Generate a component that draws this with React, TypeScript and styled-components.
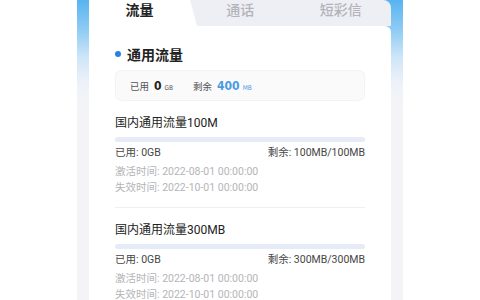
import React from "react";
import styled, { createGlobalStyle } from "styled-components";

const Global = createGlobalStyle`
  html, body { margin: 0; padding: 0; background: #ffffff; }
  body { font-family: "Roboto", "Noto Sans CJK SC", sans-serif; }
  * { box-sizing: border-box; }
`;

const Page = styled.div`
  width: 480px;
  height: 300px;
  overflow: hidden;
  display: flex;
  justify-content: center;
  background: #ffffff;
`;

const Phone = styled.div`
  width: 326px;
  height: 300px;
  padding: 0 12px;
  background: linear-gradient(
    180deg,
    #58b4f1 0px,
    #8fcbf4 30px,
    #cfe6f8 58px,
    #eef2f8 84px,
    #f4f4f6 110px,
    #f4f4f6 100%
  );
  display: flex;
  flex-direction: column;
  overflow: hidden;
`;

const TabBar = styled.div`
  flex-shrink: 0;
  display: grid;
  grid-template-columns: 101px 1fr 1fr;
  height: 26px;
  background: #eeeff5;
  border-top-right-radius: 8px;
`;

const Tab = styled.div<{ $active?: boolean }>`
  position: relative;
  display: flex;
  justify-content: center;
  align-items: flex-start;
  font-family: "Noto Sans CJK SC", sans-serif;
  font-size: 14px;
  line-height: 16px;
  font-weight: ${(p) => (p.$active ? 700 : 500)};
  color: ${(p) => (p.$active ? "#222222" : "#b3b3b9")};
  padding-top: 1px;
  &::before {
    content: "";
    display: ${(p) => (p.$active ? "block" : "none")};
    position: absolute;
    top: 0;
    bottom: 0;
    left: 0;
    right: -7px;
    background: #ffffff;
    clip-path: polygon(0 0, calc(100% - 7px) 0, 100% 100%, 0 100%);
  }
  span {
    position: relative;
  }
`;

const Card = styled.div`
  flex: 1 0 auto;
  background: #ffffff;
  border-top-right-radius: 6px;
  padding: 18px 26px 0 26px;
  display: flex;
  flex-direction: column;
`;

const SectionHead = styled.div`
  display: flex;
  align-items: center;
  gap: 6px;
  height: 20px;
  font-family: "Noto Sans CJK SC", sans-serif;
  font-size: 14px;
  font-weight: 700;
  color: #222222;
  &::before {
    content: "";
    width: 6px;
    height: 6px;
    border-radius: 50%;
    background: #2b7fe0;
  }
`;

const Summary = styled.div`
  margin-top: 6px;
  height: 31px;
  display: flex;
  align-items: center;
  gap: 20px;
  padding: 0 14px;
  background: #fafafb;
  border: 1px solid #f3f3f5;
  border-radius: 6px;
`;

const Stat = styled.div`
  display: flex;
  align-items: baseline;
  gap: 5px;
`;

const StatLabel = styled.span`
  font-family: "Noto Sans CJK SC", sans-serif;
  font-size: 9.5px;
  color: #555555;
`;

const StatValue = styled.span<{ $blue?: boolean }>`
  font-family: "DejaVu Sans Condensed", "DejaVu Sans", sans-serif;
  font-stretch: condensed;
  font-size: 12px;
  font-weight: 700;
  color: ${(p) => (p.$blue ? "#4a9be2" : "#222222")};
  display: inline-flex;
  align-items: baseline;
  gap: 3px;
`;

const StatUnit = styled.span<{ $blue?: boolean }>`
  font-family: "DejaVu Sans Condensed", "DejaVu Sans", sans-serif;
  font-size: 6.5px;
  font-weight: 400;
  color: ${(p) => (p.$blue ? "#4a9be2" : "#555555")};
`;

const Item = styled.div`
  padding: 13px 0 11px 0;
  border-bottom: 1px solid #efefef;
  display: flex;
  flex-direction: column;
`;

const ItemTitle = styled.div`
  font-family: "Roboto", "Noto Sans CJK SC", sans-serif;
  font-size: 12px;
  line-height: 18px;
  color: #222222;
`;

const Bar = styled.div`
  margin-top: 5px;
  height: 5px;
  border-radius: 3px;
  background: #e5ecf8;
  overflow: hidden;
`;

const BarFill = styled.div`
  height: 100%;
  background: #3d8ee6;
`;

const UsedRow = styled.div`
  margin-top: 3px;
  display: flex;
  justify-content: space-between;
  font-family: "Roboto", "Noto Sans CJK SC", sans-serif;
  font-size: 10.5px;
  line-height: 16px;
  color: #454545;
`;

const TimeRow = styled.div<{ $first?: boolean }>`
  margin-top: ${(p) => (p.$first ? "3px" : "0")};
  font-family: "Roboto", "Noto Sans CJK SC", sans-serif;
  font-size: 10.5px;
  line-height: 16px;
  color: #b4b4b8;
`;

const packages = [
  { name: "国内通用流量100M", used: "0GB", left: "100MB/100MB", pct: 0 },
  { name: "国内通用流量300MB", used: "0GB", left: "300MB/300MB", pct: 0 },
];

export default function App() {
  return (
    <>
      <Global />
      <Page>
        <Phone>
          <TabBar>
            <Tab $active>
              <span>流量</span>
            </Tab>
            <Tab>
              <span>通话</span>
            </Tab>
            <Tab>
              <span>短彩信</span>
            </Tab>
          </TabBar>
          <Card>
            <SectionHead>通用流量</SectionHead>
            <Summary>
              <Stat>
                <StatLabel>已用</StatLabel>
                <StatValue>
                  0<StatUnit>GB</StatUnit>
                </StatValue>
              </Stat>
              <Stat>
                <StatLabel>剩余</StatLabel>
                <StatValue $blue>
                  400<StatUnit $blue>MB</StatUnit>
                </StatValue>
              </Stat>
            </Summary>
            {packages.map((p) => (
              <Item key={p.name}>
                <ItemTitle>{p.name}</ItemTitle>
                <Bar>
                  <BarFill style={{ width: `${p.pct}%` }} />
                </Bar>
                <UsedRow>
                  <span>已用: {p.used}</span>
                  <span>剩余: {p.left}</span>
                </UsedRow>
                <TimeRow $first>激活时间: 2022-08-01 00:00:00</TimeRow>
                <TimeRow>失效时间: 2022-10-01 00:00:00</TimeRow>
              </Item>
            ))}
          </Card>
        </Phone>
      </Page>
    </>
  );
}
